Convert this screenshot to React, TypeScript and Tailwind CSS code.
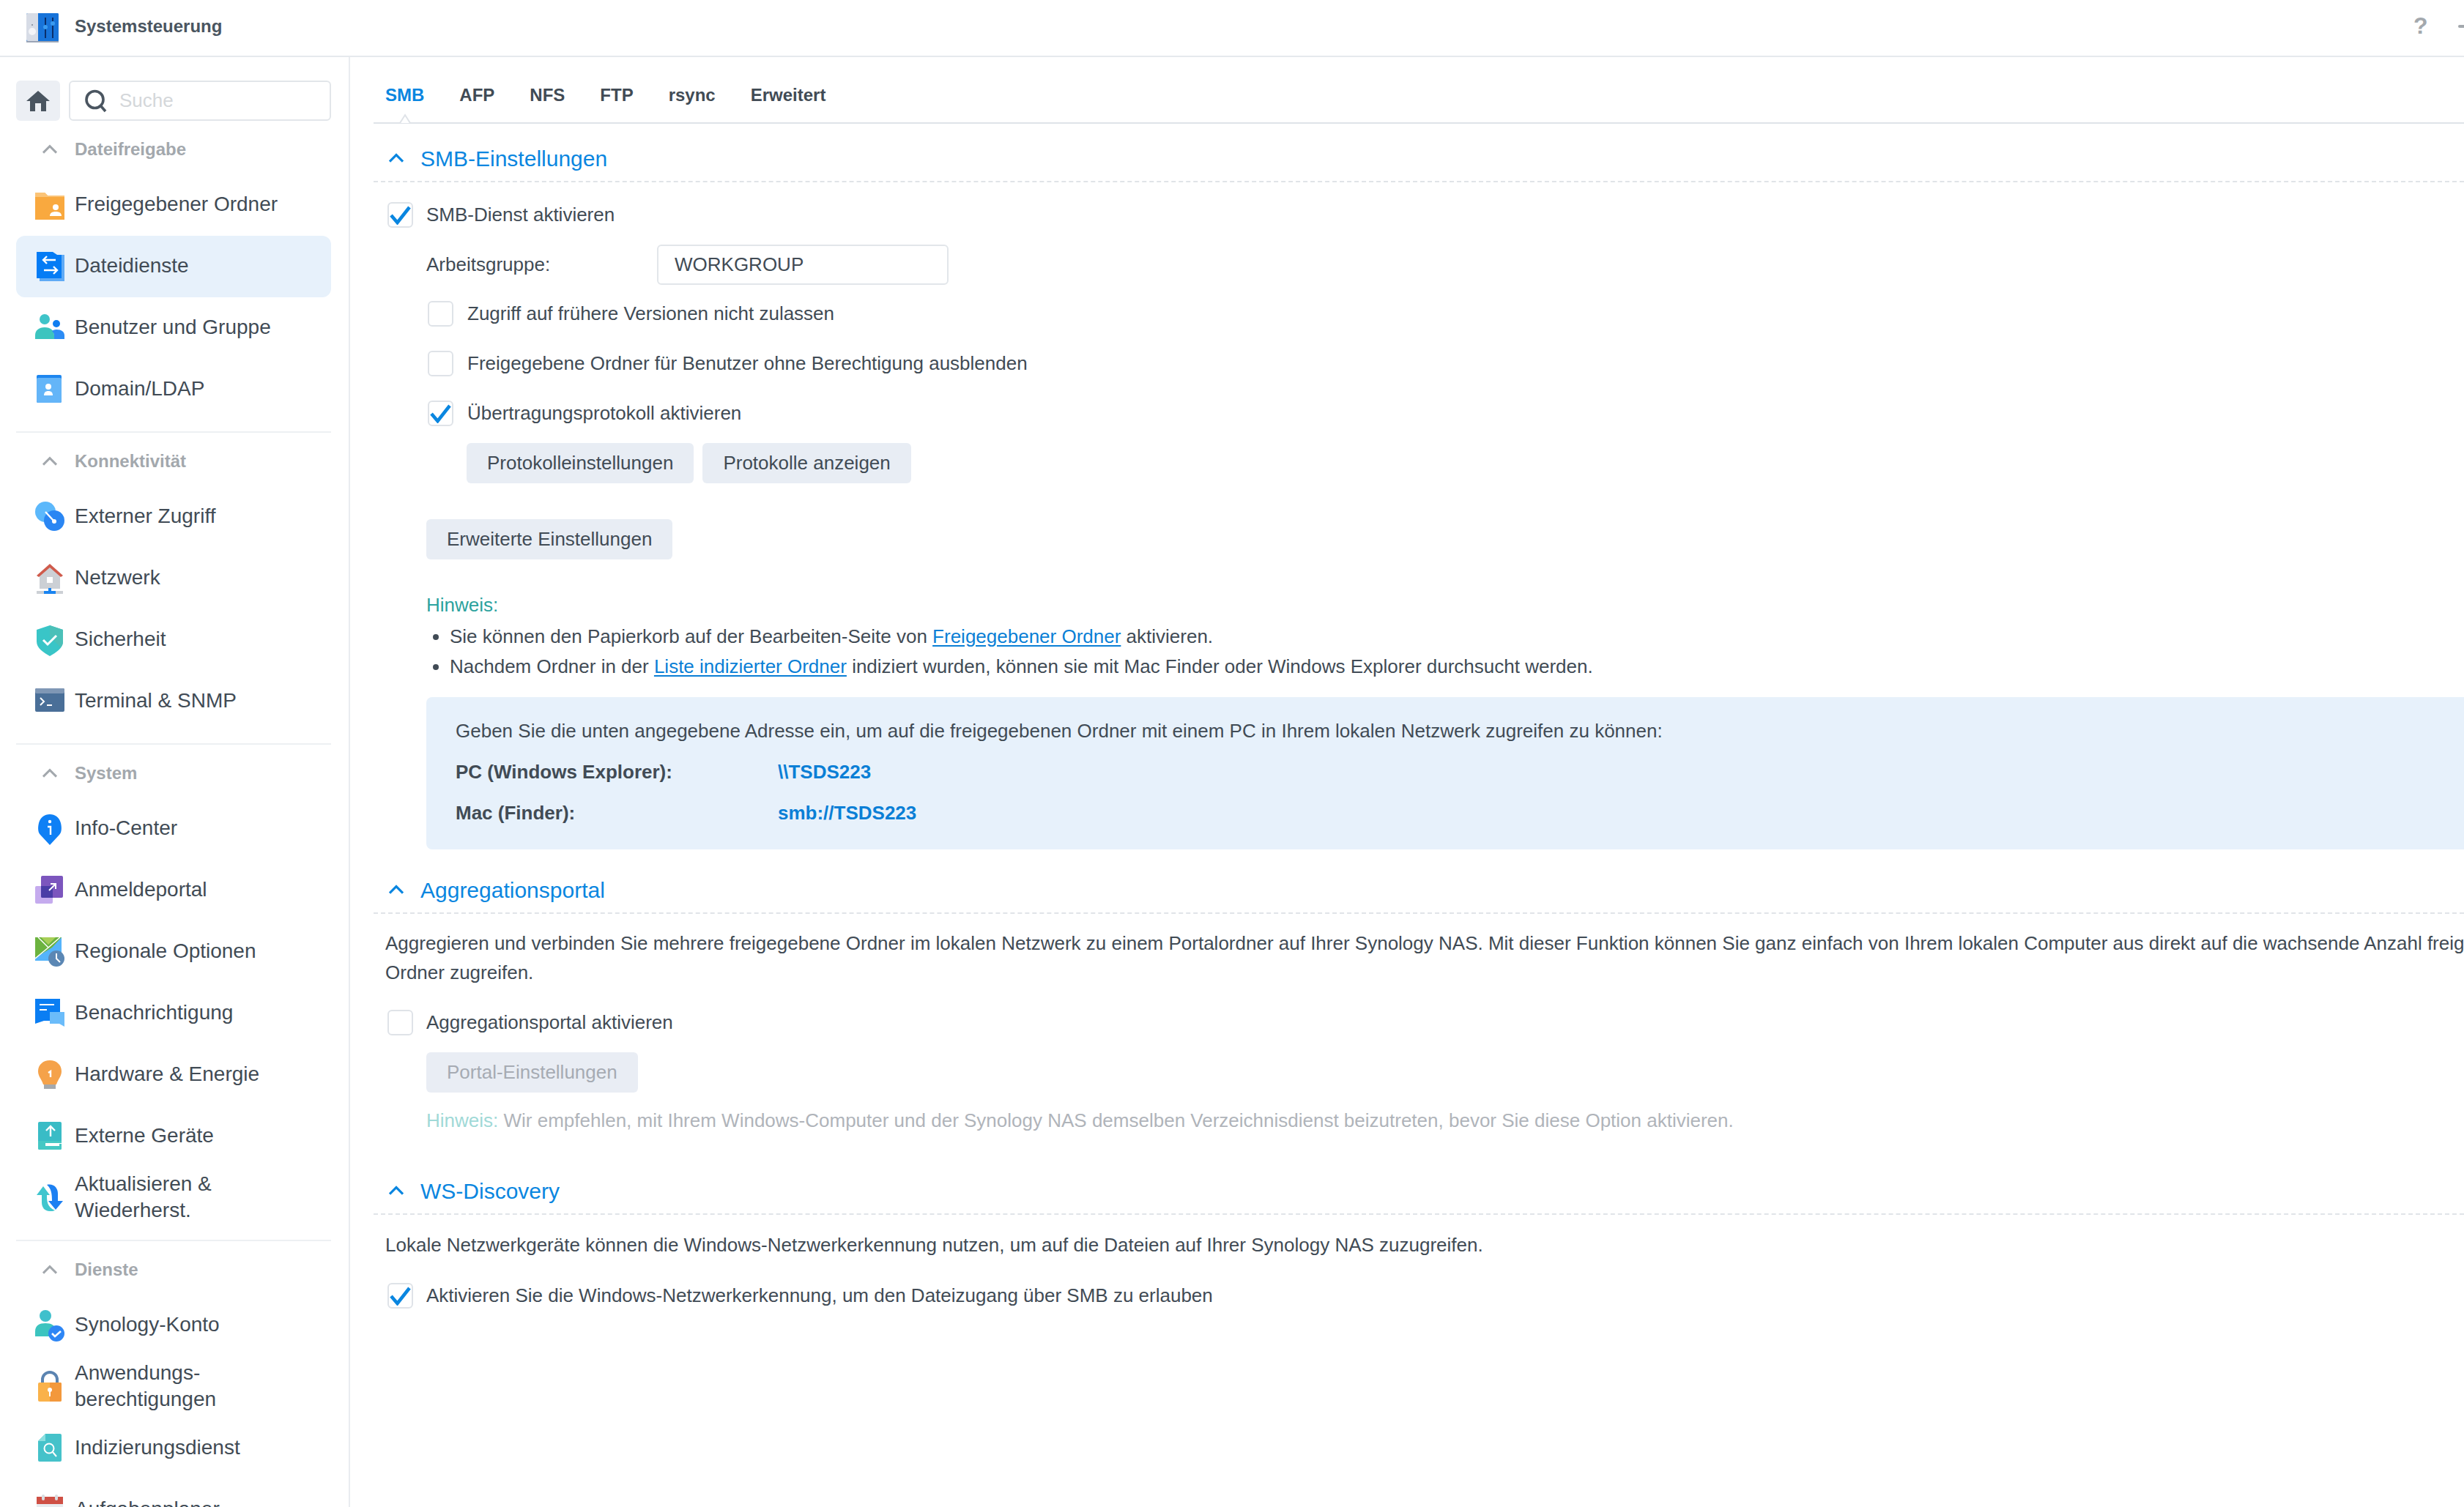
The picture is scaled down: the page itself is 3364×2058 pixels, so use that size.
import React from "react";

const F = '"Liberation Sans", Arial, sans-serif';

function Chevron({ color = "#a3a8ad", w = 22, sw = 3 }: { color?: string; w?: number; sw?: number }) {
  return (
    <svg width={w} height={w * 0.6} viewBox="0 0 22 13" fill="none">
      <path d="M2 11.5 L11 2.5 L20 11.5" stroke={color} strokeWidth={sw} />
    </svg>
  );
}

const I = ({ children }: { children: React.ReactNode }) => (
  <svg width="40" height="44" viewBox="0 0 40 44" fill="none">{children}</svg>
);

const icons: Record<string, React.ReactNode> = {
  folder: (
    <I>
      <path d="M0 5h13l4 4h23v33H0z" fill="#f9a93f" />
      <path d="M0 5h13l4 4h23v2H0z" fill="#fbc478" />
      <circle cx="28" cy="25" r="4" fill="#fff" />
      <path d="M20 37c0-4 3-6 8-6s8 2 8 6z" fill="#fff" />
    </I>
  ),
  files: (
    <I>
      <path d="M6 6h34v36H6z" fill="#5faaf5" />
      <path d="M2 2h22l6 4h6v32H2z" fill="#057cf5" />
      <path d="M28 13H11m5-5-5 5 5 5M12 27h18m-5-5 5 5-5 5" stroke="#fff" strokeWidth="2.4" />
    </I>
  ),
  users: (
    <I>
      <circle cx="13" cy="10" r="7" fill="#3fc4c9" />
      <circle cx="29" cy="16" r="5" fill="#0f7df0" />
      <path d="M0 37v-5c0-7 5-11 13-11s13 4 13 11v5z" fill="#3cc4bf" />
      <path d="M26 37h14v-5c0-5-4-8-11-8-3 0-5 1-6 2 2 2 3 4 3 6z" fill="#2d8cf5" />
    </I>
  ),
  domain: (
    <I>
      <rect x="2" y="2" width="34" height="38" rx="2" fill="#1d86ef" />
      <rect x="2" y="6" width="34" height="34" rx="2" fill="#64b5f8" />
      <circle cx="18" cy="18" r="4" fill="#fff" />
      <path d="M12 30c0-4 2-6 6-6s6 2 6 6z" fill="#fff" />
    </I>
  ),
  ext: (
    <I>
      <circle cx="14" cy="15" r="14" fill="#5cb8fb" />
      <circle cx="26" cy="27" r="14" fill="#2a86f3" />
      <path d="M14 15 26 28" stroke="#fff" strokeWidth="2.4" />
      <circle cx="26" cy="28" r="3" fill="#fff" />
    </I>
  ),
  net: (
    <I>
      <path d="M6 17 20 5l14 12v19H6z" fill="#ccd0d5" />
      <path d="M2 18 20 2l18 16-3 2L20 7 5 20z" fill="#cf5b4c" />
      <path d="M16 20h8v8h-8z" fill="#fff" />
      <path d="M2 39h36v4H2z" fill="#ccd0d5" />
      <path d="M18 35h4v4h6v4H12v-4h6z" fill="#1a84f0" />
    </I>
  ),
  shield: (
    <I>
      <path d="M20 2 38 8v16c0 9-9 15-18 20C11 39 2 33 2 24V8z" fill="#39c5c7" />
      <path d="M20 2 38 8v16c0 3-1 6-3 8L20 18z" fill="#4bc0b8" />
      <path d="M11 22l6 6 12-12" stroke="#fff" strokeWidth="3" />
    </I>
  ),
  term: (
    <I>
      <rect x="0" y="4" width="40" height="32" rx="2" fill="#4a6f98" />
      <rect x="0" y="4" width="40" height="7" rx="2" fill="#7f97b5" />
      <path d="M7 17l5 5-5 5" stroke="#fff" strokeWidth="2" />
      <path d="M16 27h7" stroke="#fff" strokeWidth="2" />
    </I>
  ),
  info: (
    <I>
      <path d="M20 44 7 30C3 26 4 18 5 14 7 6 13 2 20 2s13 4 15 12c1 4 2 12-2 16z" fill="#0f80f5" />
      <circle cx="20" cy="12" r="2.2" fill="#fff" />
      <path d="M17 19h4v11" stroke="#fff" strokeWidth="2.4" />
    </I>
  ),
  portal: (
    <I>
      <rect x="0" y="16" width="24" height="24" rx="2" fill="#c5abee" />
      <rect x="8" y="2" width="30" height="30" rx="2" fill="#7c56bd" />
      <path d="M8 16h16v16H10a2 2 0 0 1-2-2z" fill="#4a3da6" />
      <path d="M19 22l9-9m-7 0h7v7" stroke="#fff" strokeWidth="2" />
    </I>
  ),
  region: (
    <I>
      <path d="M0 2h36v32H0z" fill="#55b4fb" />
      <path d="M0 2h8l28 0-13 14L0 30z" fill="#6cb33f" />
      <path d="M8 2 18 12 28 2z" fill="#a8cf58" />
      <path d="M4 2 18 16 0 31M34 2 18 16" stroke="#fff" strokeWidth="1.4" />
      <circle cx="29" cy="31" r="11" fill="#5b87b4" />
      <path d="M29 24v7l5 5" stroke="#fff" strokeWidth="2" />
    </I>
  ),
  notify: (
    <I>
      <path d="M0 2h34v30H12L0 36z" fill="#0a7ef3" />
      <path d="M6 10h20M6 17h10" stroke="#fff" strokeWidth="2" />
      <path d="M20 20h20v20l-7-4H20z" fill="#6bbcfa" />
    </I>
  ),
  bulb: (
    <I>
      <path d="M20 2c9 0 16 6 16 15 0 7-5 11-7 18H11c-2-7-7-11-7-18C4 8 11 2 20 2z" fill="#f5a24a" />
      <path d="M12 35h16v6H12z" fill="#a5a9ad" />
      <path d="M18 19l3-2v8" stroke="#fff" strokeWidth="2.4" />
    </I>
  ),
  ext2: (
    <I>
      <rect x="4" y="2" width="32" height="38" rx="2" fill="#39bcc6" />
      <path d="M4 28h32v10a2 2 0 0 1-2 2H6a2 2 0 0 1-2-2z" fill="#45c8c4" />
      <path d="M21 22V8m-6 6 6-6 6 6" stroke="#fff" strokeWidth="2.4" />
      <path d="M14 32h22v-1H14zM14 32h19v3H14z" fill="#fff" />
    </I>
  ),
  update: (
    <I>
      <path d="M20 40c-7 0-11-5-11-12V18H2L11 6l9 12h-4c0 8 0 16 11 21-2 1-5 1-7 1z" fill="#40c6ce" />
      <path d="M16 4c9-2 15 4 15 12v10h7L28 38 18 26h5C23 16 22 9 16 4z" fill="#1d80f2" />
    </I>
  ),
  account: (
    <I>
      <circle cx="14" cy="9" r="8" fill="#3fc0cc" />
      <path d="M0 37v-7c0-8 6-11 14-11s14 3 14 11v7z" fill="#3cc4bf" />
      <circle cx="29" cy="33" r="11" fill="#2e86f5" />
      <path d="M23 33l4 4 8-7" stroke="#fff" strokeWidth="2.6" />
    </I>
  ),
  lock: (
    <I>
      <path d="M10 20V12a10 10 0 0 1 20 0v8" stroke="#5b84b1" strokeWidth="4" />
      <rect x="4" y="16" width="32" height="26" rx="2" fill="#fab24a" />
      <path d="M20 16h14a2 2 0 0 1 2 2v22a2 2 0 0 1-2 2H20z" fill="#f3983c" />
      <circle cx="20" cy="26" r="3" fill="#fff" />
      <path d="M20 26v9" stroke="#fff" strokeWidth="2" />
    </I>
  ),
  search: (
    <I>
      <path d="M14 2h20a2 2 0 0 1 2 2v34a2 2 0 0 1-2 2H6a2 2 0 0 1-2-2V12z" fill="#45c2ca" />
      <path d="M14 2v10H4z" fill="#8adfe0" />
      <circle cx="19" cy="22" r="6.5" stroke="#fff" strokeWidth="2" />
      <path d="M24 27l5 6" stroke="#fff" strokeWidth="2" />
    </I>
  ),
  cal: (
    <I>
      <rect x="2" y="4" width="36" height="38" rx="2" fill="#e8ebef" />
      <path d="M2 4h36v10H2z" fill="#cf5045" />
      <rect x="9" y="1" width="4" height="8" rx="2" fill="#d8dce0" />
      <rect x="27" y="1" width="4" height="8" rx="2" fill="#d8dce0" />
    </I>
  ),
};

function Item({ icon, active, children }: { icon: string; active?: boolean; children: React.ReactNode }) {
  return (
    <div className={`flex items-center h-[84px] shrink-0 pl-[26px] rounded-[12px] ${active ? "bg-[#e7f1fb]" : ""}`}>
      <div className="w-[40px] h-[44px] shrink-0 -mt-[1px]">{icons[icon]}</div>
      <div className="ml-[14px] -mt-[2px] text-[28px] leading-[36px] text-[#414b55]">{children}</div>
    </div>
  );
}

function GroupHead({ children }: { children: React.ReactNode }) {
  return (
    <div className="flex items-center h-[73px] pt-[5px] pl-[35px] shrink-0">
      <div className="w-[22px] flex justify-center -mt-[1px]"><Chevron /></div>
      <div className="ml-[23px] text-[24px] font-bold text-[#a3a8ad] leading-[30px] -mt-[1px]">{children}</div>
    </div>
  );
}

const Divider = () => <div className="h-[2px] bg-[#edf0f3] mt-[15px] shrink-0" />;

function CheckBox({ checked }: { checked?: boolean }) {
  return (
    <div className="relative w-[35px] h-[35px] rounded-[6px] border-2 border-[#dfe3e8] bg-white shrink-0">
      {checked && (
        <svg className="absolute left-[1px] top-[3px]" width="30" height="26" viewBox="0 0 30 26" fill="none">
          <path d="M2 13 L10.5 23 L27 2" stroke="#0a86e0" strokeWidth="4.6" />
        </svg>
      )}
    </div>
  );
}

function Section({ title, children }: { title: string; children?: React.ReactNode }) {
  return (
    <div>
      <div className="flex items-center h-[64px] pl-[20px] border-b-2 border-dashed border-[#e0e4e8]">
        <Chevron color="#0a86e0" w={22} sw={3.2} />
        <div className="ml-[22px] mt-[1px] text-[30px] leading-[36px] text-[#0a86e0]">{title}</div>
      </div>
      {children}
    </div>
  );
}

function Row({ h, checked, children }: { h: string; checked?: boolean; children: React.ReactNode }) {
  return (
    <div className={`flex items-center pl-[74px] ${h}`}>
      <CheckBox checked={checked} />
      <div className="ml-[19px]">{children}</div>
    </div>
  );
}

function Btn({ children, disabled }: { children: React.ReactNode; disabled?: boolean }) {
  return (
    <div className={`inline-flex items-center justify-center h-[55px] px-[28px] rounded-[6px] ${disabled ? "bg-[#e9edf4] text-[#a6abb3]" : "bg-[#e8edf4] text-[#414b55]"}`}>
      {children}
    </div>
  );
}

const A = ({ children }: { children: React.ReactNode }) => (
  <span className="text-[#0a7fd6] underline underline-offset-[3px]">{children}</span>
);

export default function App() {
  return (
    <div className="w-[3364px] h-[2058px] overflow-hidden bg-white flex flex-col text-[26px] text-[#414b55]" style={{ fontFamily: F }}>
      <header className="flex items-center h-[78px] shrink-0 border-b-2 border-[#e6e9ed] relative">
        <div className="ml-[36px] w-[44px] h-[40px] shrink-0">
          <svg width="44" height="40" viewBox="0 0 44 40" fill="none">
            <rect x="0" y="0" width="44" height="39" rx="2" fill="#0e6fd6" />
            <path d="M16 0h26a2 2 0 0 1 2 2v34a2 2 0 0 1-2 2H16z" fill="#1773d9" />
            <path d="M2 0h14v38H2a2 2 0 0 1-2-2V2a2 2 0 0 1 2-2z" fill="#d7dce6" />
            <circle cx="8" cy="25" r="5" fill="#f3f4f8" />
            <circle cx="8" cy="16" r="1" fill="#7a8495" />
            <path d="M26 6v28M36 6v28" stroke="#0a2f6b" strokeWidth="2" />
            <circle cx="26" cy="19" r="3" fill="#3a9bf0" />
            <circle cx="36" cy="14" r="3" fill="#3a9bf0" />
            <path d="M0 38h44v2H0z" fill="#9aa4b5" />
          </svg>
        </div>
        <div className="ml-[22px] text-[24px] font-bold text-[#4a5560] -mt-[4px]">Systemsteuerung</div>
        <div className="absolute left-[3295px] top-[17px] text-[32px] leading-[36px] font-bold text-[#a3a8ad]">?</div>
        <div className="absolute left-[3356px] top-[34px] w-[10px] h-[4px] rounded-[2px] bg-[#a3a8ad]" />
      </header>

      <div className="flex flex-1 min-h-0">
        <aside className="w-[478px] shrink-0 border-r-2 border-[#e9ecf0] pl-[22px] pr-[24px] pt-[32px] overflow-hidden flex flex-col">
          <div className="flex gap-[12px] h-[55px] shrink-0">
            <div className="w-[60px] h-[55px] rounded-[6px] bg-[#eceff4] flex items-center justify-center">
              <svg width="34" height="30" viewBox="0 0 34 30" fill="#4a5560">
                <path d="M17 1 33 15h-5v14H6V15H1z" />
                <path d="M13 18h8v11h-8z" fill="#eceff4" />
              </svg>
            </div>
            <div className="flex-1 h-[55px] rounded-[6px] border-2 border-[#e2e6ea] flex items-center pl-[19px]">
              <svg width="32" height="32" viewBox="0 0 32 32" fill="none">
                <circle cx="14.5" cy="14" r="11.5" stroke="#4a5560" strokeWidth="3.6" />
                <path d="M22 22l7 8" stroke="#4a5560" strokeWidth="3.6" />
              </svg>
              <span className="ml-[16px] text-[26px] text-[#d4d7da]">Suche</span>
            </div>
          </div>

          <GroupHead>Dateifreigabe</GroupHead>
          <Item icon="folder">Freigegebener Ordner</Item>
          <Item icon="files" active>Dateidienste</Item>
          <Item icon="users">Benutzer und Gruppe</Item>
          <Item icon="domain">Domain/LDAP</Item>
          <Divider />
          <GroupHead>Konnektivität</GroupHead>
          <Item icon="ext">Externer Zugriff</Item>
          <Item icon="net">Netzwerk</Item>
          <Item icon="shield">Sicherheit</Item>
          <Item icon="term">Terminal &amp; SNMP</Item>
          <Divider />
          <GroupHead>System</GroupHead>
          <Item icon="info">Info-Center</Item>
          <Item icon="portal">Anmeldeportal</Item>
          <Item icon="region">Regionale Optionen</Item>
          <Item icon="notify">Benachrichtigung</Item>
          <Item icon="bulb">Hardware &amp; Energie</Item>
          <Item icon="ext2">Externe Geräte</Item>
          <Item icon="update">Aktualisieren &amp;<br />Wiederherst.</Item>
          <Divider />
          <GroupHead>Dienste</GroupHead>
          <Item icon="account">Synology-Konto</Item>
          <Item icon="lock">Anwendungs-<br />berechtigungen</Item>
          <Item icon="search">Indizierungsdienst</Item>
          <Item icon="cal">Aufgabenplaner</Item>
        </aside>

        <main className="flex-1 min-w-0 overflow-hidden pl-[32px]">
          <div className="relative flex items-center gap-[48px] h-[91px] pt-[15px] pl-[16px] border-b-2 border-[#dfe3e8] text-[24px] font-bold">
            <span className="text-[#0a86e0]">SMB</span>
            <span>AFP</span>
            <span>NFS</span>
            <span>FTP</span>
            <span>rsync</span>
            <span>Erweitert</span>
            <svg className="absolute left-[30px] -bottom-[2px]" width="26" height="14" viewBox="0 0 26 14" fill="none">
              <path d="M0 13h6L13 2l7 11h6" fill="#fff" stroke="#dfe3e8" strokeWidth="2" />
            </svg>
          </div>

          <div className="mt-[16px]">
            <Section title="SMB-Einstellungen">
              <div className="flex items-center h-[60px] mt-[14px] pl-[19px]">
                <CheckBox checked />
                <span className="ml-[18px]">SMB-Dienst aktivieren</span>
              </div>
              <div className="flex items-center h-[55px] mt-[11px] pl-[72px]">
                <span className="w-[315px]">Arbeitsgruppe:</span>
                <div className="w-[398px] h-[55px] rounded-[6px] border-2 border-[#e2e6ea] flex items-center pl-[22px]">WORKGROUP</div>
              </div>
              <Row h="h-[68px] mt-[5px]">Zugriff auf frühere Versionen nicht zulassen</Row>
              <Row h="h-[68px]">Freigegebene Ordner für Benutzer ohne Berechtigung ausblenden</Row>
              <Row h="h-[68px]" checked>Übertragungsprotokoll aktivieren</Row>
              <div className="flex gap-[12px] pl-[127px] mt-[7px]">
                <Btn>Protokolleinstellungen</Btn>
                <Btn>Protokolle anzeigen</Btn>
              </div>
              <div className="pl-[72px] mt-[49px]"><Btn>Erweiterte Einstellungen</Btn></div>
              <div className="pl-[72px] mt-[42px] leading-[41px]">
                <div className="text-[#2ba29e]">Hinweis:</div>
                <div className="flex items-center mt-[2px]">
                  <span className="w-[8px] h-[8px] rounded-full bg-[#414b55] ml-[9px] mr-[15px]" />
                  <span>Sie können den Papierkorb auf der Bearbeiten-Seite von <A>Freigegebener Ordner</A> aktivieren.</span>
                </div>
                <div className="flex items-center">
                  <span className="w-[8px] h-[8px] rounded-full bg-[#414b55] ml-[9px] mr-[15px]" />
                  <span>Nachdem Ordner in der <A>Liste indizierter Ordner</A> indiziert wurden, können sie mit Mac Finder oder Windows Explorer durchsucht werden.</span>
                </div>
              </div>
              <div className="ml-[72px] mt-[21px] h-[208px] rounded-l-[8px] bg-[#e7f1fb] pl-[40px] pt-[26px] leading-[40px]">
                <div>Geben Sie die unten angegebene Adresse ein, um auf die freigegebenen Ordner mit einem PC in Ihrem lokalen Netzwerk zugreifen zu können:</div>
                <div className="flex font-bold mt-[16px]">
                  <span className="w-[440px]">PC (Windows Explorer):</span>
                  <span className="text-[#0a7fd6]">\\TSDS223</span>
                </div>
                <div className="flex font-bold mt-[16px]">
                  <span className="w-[440px]">Mac (Finder):</span>
                  <span className="text-[#0a7fd6]">smb://TSDS223</span>
                </div>
              </div>
            </Section>

            <div className="mt-[24px]">
              <Section title="Aggregationsportal">
                <div className="pl-[16px] mt-[20px] leading-[40px] whitespace-nowrap">
                  <div>Aggregieren und verbinden Sie mehrere freigegebene Ordner im lokalen Netzwerk zu einem Portalordner auf Ihrer Synology NAS. Mit dieser Funktion können Sie ganz einfach von Ihrem lokalen Computer aus direkt auf die wachsende Anzahl freigegebener</div>
                  <div>Ordner zugreifen.</div>
                </div>
                <div className="flex items-center h-[60px] mt-[18px] pl-[19px]">
                  <CheckBox />
                  <span className="ml-[18px]">Aggregationsportal aktivieren</span>
                </div>
                <div className="pl-[72px] mt-[11px]"><Btn disabled>Portal-Einstellungen</Btn></div>
                <div className="pl-[72px] mt-[18px] leading-[40px] text-[#b0b4ba]">
                  <span className="text-[#a0d9d7]">Hinweis: </span>Wir empfehlen, mit Ihrem Windows-Computer und der Synology NAS demselben Verzeichnisdienst beizutreten, bevor Sie diese Option aktivieren.
                </div>
              </Section>
            </div>

            <div className="mt-[45px]">
              <Section title="WS-Discovery">
                <div className="pl-[16px] mt-[21px] leading-[40px]">Lokale Netzwerkgeräte können die Windows-Netzwerkerkennung nutzen, um auf die Dateien auf Ihrer Synology NAS zuzugreifen.</div>
                <div className="flex items-center h-[60px] mt-[19px] pl-[19px]">
                  <CheckBox checked />
                  <span className="ml-[18px]">Aktivieren Sie die Windows-Netzwerkerkennung, um den Dateizugang über SMB zu erlauben</span>
                </div>
              </Section>
            </div>
          </div>
        </main>
      </div>
    </div>
  );
}
